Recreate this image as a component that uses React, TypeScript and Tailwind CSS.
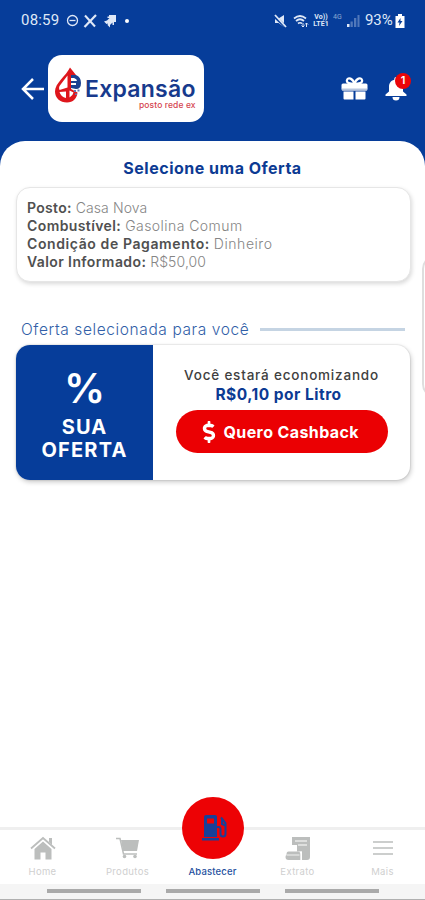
import type { ReactNode } from 'react'
import { FaDollarSign } from 'react-icons/fa'

function StatusBar() {
  return (
    <div className="flex h-[41px] items-center justify-between pl-[21px] pr-[20px] text-[#dfe8f7]">
      <div className="flex items-center">
        <span className="w-[40px] font-[Roboto] text-[15px] tracking-[0.2px] whitespace-nowrap">08:59</span>
        <svg className="ml-[5px]" width="13" height="13" viewBox="0 0 13 13" fill="none" stroke="currentColor" strokeWidth="1.3">
          <circle cx="6.5" cy="6.5" r="5" />
          <path d="M3.5 6.5h6" />
        </svg>
        <svg className="ml-[4px]" width="15" height="14" viewBox="0 0 15 14" fill="none" stroke="currentColor">
          <path d="M2 1.5l10 11" strokeWidth="2" />
          <path d="M13 1L1.5 13" strokeWidth="2.2" />
        </svg>
        <svg className="ml-[5px]" width="14" height="14" viewBox="0 0 14 14" fill="currentColor">
          <path d="M6 1h7v7H11v3H9.500V8.500L7 11v2.500L4.500 11 5 9.500 3.500 10 1 7.500l3-1L6.500 4H4.500V2.500H6z" />
        </svg>
        <span className="ml-[8px] h-[4px] w-[4px] rounded-full bg-white" />
      </div>
      <div className="flex items-center">
        <svg width="13" height="14" viewBox="0 0 13 14" fill="currentColor">
          <path d="M1 4.500h3.500L10 1v12L4.500 9H1z" />
          <path d="M0 2l12 11" stroke="#063d9a" strokeWidth="3" />
          <path d="M1 1l11 12" stroke="currentColor" strokeWidth="1.800" />
        </svg>
        <svg className="ml-[6px]" width="16" height="14" viewBox="0 0 16 14" fill="none" stroke="currentColor" strokeWidth="1.7">
          <path d="M1 4.5Q7 -.5 13 4.5M3 7Q7 3.500 11 7M5 9.500Q7 8 9 9.500" />
          <path d="M10 9v4M8.500 11.500L10 13l1.500-1.500M13.500 13V9M12 10.500L13.500 9 15 10.500" strokeWidth="1" />
        </svg>
        <span className="ml-[4px] flex w-[16px] flex-col items-center font-[Roboto] text-[7px] leading-[6.5px] font-bold whitespace-nowrap">
          <span>Vo))</span>
          <span>LTE1</span>
        </span>
        <span className="mb-[7px] ml-[4px] w-[10px] font-[Roboto] text-[7px] leading-[8px] opacity-60">4G</span>
        <svg className="ml-[4px]" width="13" height="13" viewBox="0 0 13 13" fill="currentColor">
          <path d="M0 10h2.500v3H0z" />
          <path d="M3.500 7.500h2.300V13H3.500zM7 4h2.300v9H7zM10.500 1h2v12h-2z" opacity=".35" />
        </svg>
        <span className="ml-[5px] w-[29px] font-[Roboto] text-[15px] tracking-[-0.1px] whitespace-nowrap">93%</span>
        <svg className="ml-[1px]" width="10" height="14" viewBox="0 0 10 14">
          <path d="M3 0h4v2h2.500v12H.5V2H3z" fill="#fff" />
          <path d="M5.500 4L2.500 8.500h2L4 12l3.500-5h-2z" fill="#063d9a" />
        </svg>
      </div>
    </div>
  )
}

function Logo() {
  return (
    <div className="ml-[4px] flex h-[67px] w-[156px] rounded-[14px] bg-white">
      <svg className="mt-[11px] ml-[6px] shrink-0" width="28" height="38" viewBox="0 0 28 38">
        <path d="M16 1.500C12 10 1 17 1 25.500 1 32 6 36.500 13 36.500c6 0 10-4 10.500-10L17 23V10l5-1z" fill="#de161c" />
        <path d="M13.500 9.500v12L5.500 24q-1-2 0-4zM5.500 26l6.500-.5v6.500q-5-1-6.500-6zM15.500 24.500l4 2q-.5 3-4 5z" fill="#fff" />
        <path d="M17 9h5q5 2 5 8t-5 6l-5-1v-3h5v-2h-5v-2h6q0-2-3-3h-3z" fill="#1c4191" />
        <path d="M20 24h2v2h-2zM23.500 23.500h2v2h-2zM21 27.500h2v1.500h-2z" fill="#5d79b4" />
      </svg>
      <div className="mt-[22px] ml-[3px] flex w-[112px] flex-col">
        <span className="font-[Inter] text-[23px] leading-[24px] font-semibold tracking-[0.25px] whitespace-nowrap text-[#173a8d]">Expansão</span>
        <span className="ml-[54px] font-[Inter] text-[8.5px] leading-[8px] font-medium tracking-[0.1px] whitespace-nowrap text-[#d5444f]">posto rede ex</span>
      </div>
    </div>
  )
}

function Header() {
  return (
    <header className="h-[170px] bg-[#063d9a]">
      <StatusBar />
      <div className="mt-[14px] flex items-center pl-[21px]">
        <svg width="23" height="22" viewBox="0 0 23 22" fill="none" stroke="#fff" strokeWidth="2.5">
          <path d="M12 1L2 11l10 10M2.500 11H23" />
        </svg>
        <Logo />
        <svg className="ml-[137px]" width="27" height="24" viewBox="0 0 27 24">
          <path d="M13.500 7C9 7 5 6 6 3s6-2 7.500 4C15 1 20 0 21 3s-3 4-7.500 4z" fill="none" stroke="#fff" strokeWidth="2.2" />
          <rect x=".5" y="6.500" width="26" height="7" rx="1.500" fill="#fff" />
          <path d="M1 11.500h25v2H1z" fill="#b8c6de" />
          <path d="M2.500 14.500h10v8h-9a1 1 0 0 1-1-1zM14.500 14.500h10v7a1 1 0 0 1-1 1h-9z" fill="#fff" />
        </svg>
        <div className="relative ml-[17px] h-[24px] w-[22px]">
          <svg width="22" height="24" viewBox="0 0 22 24" fill="#fff">
            <path d="M11 0a1.700 1.700 0 0 0-1.700 1.700v1C5.500 3.500 4 6.500 4 10v4.500L.5 17.500v1.500h21v-1.500L18 14.500V10c0-3.500-1.500-6.500-5.300-7.300v-1A1.700 1.700 0 0 0 11 0zM7.500 20h7a3.500 3.500 0 0 1-7 0z" />
          </svg>
          <span className="absolute top-[-4px] left-[10px] flex h-[16px] w-[16px] items-center justify-center rounded-full bg-[#eb0508] font-[Inter] text-[11px] font-semibold text-white">1</span>
        </div>
      </div>
    </header>
  )
}

function Info({ label, value, labelClass, valueClass }: { label: string; value: string; labelClass: string; valueClass: string }) {
  return (
    <p className="h-[18px] whitespace-nowrap">
      <span className={`font-semibold text-[#505050] ${labelClass}`}>{label}</span>{' '}
      <span className={`font-light text-[#858585] ${valueClass}`}>{value}</span>
    </p>
  )
}

function Tab({ label, children }: { label: string; children: ReactNode }) {
  return (
    <div className="flex w-[85px] flex-col items-center text-[#bcbebd]">
      <div className="flex h-[26px] items-center">{children}</div>
      <span className="mt-[5px] font-[Inter] text-[9.5px] leading-[12px] tracking-[0.35px] text-[#cfcfcf]">{label}</span>
    </div>
  )
}

function BottomNav() {
  return (
    <nav className="relative z-20 border-t-[3px] border-[#efefef] bg-white">
      <div className="flex h-[54px] pt-[5px]">
        <Tab label="Home">
          <svg width="26" height="24" viewBox="0 0 26 24" fill="currentColor">
            <path d="M13 5.500l8.500 7.500v10.500h-6v-7h-5v7h-6V13z" />
            <path d="M1 12.500L13 2l12 10.500" fill="none" stroke="currentColor" strokeWidth="1.800" />
            <path d="M19 2h3v7l-3-3z" />
          </svg>
        </Tab>
        <Tab label="Produtos">
          <svg width="23" height="22" viewBox="0 0 23 22" fill="currentColor">
            <path d="M5 3h18l-2 11H7z" />
            <path d="M0 1.500h4L7.500 17H21" fill="none" stroke="currentColor" strokeWidth="1.500" />
            <circle cx="8.500" cy="19.500" r="1.800" />
            <circle cx="19" cy="19.500" r="1.800" />
          </svg>
        </Tab>
        <div className="flex w-[85px] justify-center pt-[31px] font-[Inter] text-[9.5px] leading-[12px] font-medium tracking-[0.15px] text-[#244f9e]">Abastecer</div>
        <Tab label="Extrato">
          <svg width="25" height="23" viewBox="0 0 25 23" fill="currentColor">
            <path d="M7 0h18v20a3 3 0 0 1-3 3h-5v-8.500H12V8H7z" />
            <path d="M3.500 14.500h9q3 0 3 3V23h-12Q.5 23 .5 20q0-1.500 1-2.500 0-3 2-3z" />
            <path d="M10 4h12M13 8h9" stroke="#fff" strokeWidth="1.200" />
            <path d="M1.500 18h13M16 14v9" stroke="#fff" strokeWidth=".8" />
          </svg>
        </Tab>
        <Tab label="Mais">
          <svg width="20" height="16" viewBox="0 0 20 16" fill="none" stroke="currentColor" strokeWidth="1.600">
            <path d="M0 2h20M0 8h20M0 14h20" />
          </svg>
        </Tab>
      </div>
      <div className="flex h-[16px] gap-[25px] border-b border-[#b0b0b0] bg-[#f5f5f5] pt-[5px] pl-[47px]">
        <span className="h-[4px] w-[94px] bg-[#aaa]" />
        <span className="h-[4px] w-[94px] bg-[#aaa]" />
        <span className="h-[4px] w-[94px] bg-[#aaa]" />
      </div>
      <button className="absolute top-[-33px] left-[182px] flex h-[62px] w-[62px] items-center justify-center rounded-full bg-[#ed0205]">
        <svg className="mr-[-4px]" width="28" height="28" viewBox="0 0 28 28" fill="#17409a">
          <path fillRule="evenodd" d="M3 3q0-2 2-2h9q2 0 2 2v20H3zM6 4.500v5h7v-5z" />
          <path d="M1 24h17v2.500H1z" />
          <path d="M16 13h1.500q2 0 2 2v5q0 2.500 2.500 2.500t2.500-2.500V9L20 3.500M21 5v5l3.500 1.500" fill="none" stroke="#17409a" strokeWidth="2" />
        </svg>
      </button>
    </nav>
  )
}

export default function App() {
  return (
    <div className="flex h-[900px] w-[425px] flex-col overflow-hidden bg-white font-[Inter]">
      <Header />
      <main className="relative z-10 mt-[-29px] flex-1 rounded-t-[25px] bg-white px-[16px] pt-[17px]">
        <h1 className="text-center text-[16px] leading-[20px] font-bold tracking-[0.5px] text-[#0c3a93]">Selecione uma Oferta</h1>

        <section className="mt-[9px] h-[95px] w-[395px] rounded-[14px] border border-[#e6e6e6] bg-white pt-[11px] pl-[10px] text-[14px] leading-[18px] shadow-[1px_2px_4px_rgba(0,0,0,0.15)]">
          <Info label="Posto:" value="Casa Nova" labelClass="tracking-[0.3px]" valueClass="tracking-[0.1px]" />
          <Info label="Combustível:" value="Gasolina Comum" labelClass="tracking-[0.4px]" valueClass="tracking-[0.45px]" />
          <Info label="Condição de Pagamento:" value="Dinheiro" labelClass="tracking-[0.6px]" valueClass="tracking-[0.55px]" />
          <Info label="Valor Informado:" value="R$50,00" labelClass="tracking-[0.4px]" valueClass="tracking-[0.1px]" />
        </section>

        <div className="mt-[37px] flex h-[21px] items-center pl-[5px]">
          <h2 className="w-[239px] text-[15.5px] leading-[20px] font-light tracking-[0.6px] whitespace-nowrap text-[#325fa8]">Oferta selecionada para você</h2>
          <span className="h-[2.5px] w-[145px] bg-[#c5d4e3]" />
        </div>

        <section className="mt-[5px] flex h-[135px] w-[394px] overflow-hidden rounded-[14px] bg-white shadow-[1px_2px_5px_rgba(0,0,0,0.22),0_0_1px_1px_rgba(0,0,0,0.06)]">
          <div className="flex w-[137px] flex-col items-center bg-[#063d9a] pt-[21px] text-white">
            <span className="text-[41px] leading-[44px] font-semibold">%</span>
            <span className="mt-[6px] text-[20px] leading-[23px] font-bold tracking-[1px]">SUA</span>
            <span className="text-[20px] leading-[23px] font-bold tracking-[1.2px]">OFERTA</span>
          </div>
          <div className="flex flex-1 flex-col items-center pt-[21px]">
            <p className="text-[13.5px] leading-[19px] font-medium tracking-[0.8px] whitespace-nowrap text-[#404040]">Você estará economizando</p>
            <p className="mr-[6px] text-[15.5px] leading-[19px] font-bold tracking-[0.5px] whitespace-nowrap text-[#0c3a93]">R$0,10 por Litro</p>
            <button className="mt-[6px] flex h-[43px] w-[212px] items-center rounded-full bg-[#eb0003] pl-[25px] text-white">
              <FaDollarSign className="h-[22px] w-[16px]" />
              <span className="ml-[7px] text-[16px] font-bold tracking-[0.4px] whitespace-nowrap">Quero Cashback</span>
            </button>
          </div>
        </section>

        {/* next card of the carousel, peeking in from the right edge */}
        <div className="absolute top-[114px] left-[422px] h-[143px] w-[40px] rounded-[14px] border-2 border-[#dedede] bg-white" />
      </main>
      <BottomNav />
    </div>
  )
}
